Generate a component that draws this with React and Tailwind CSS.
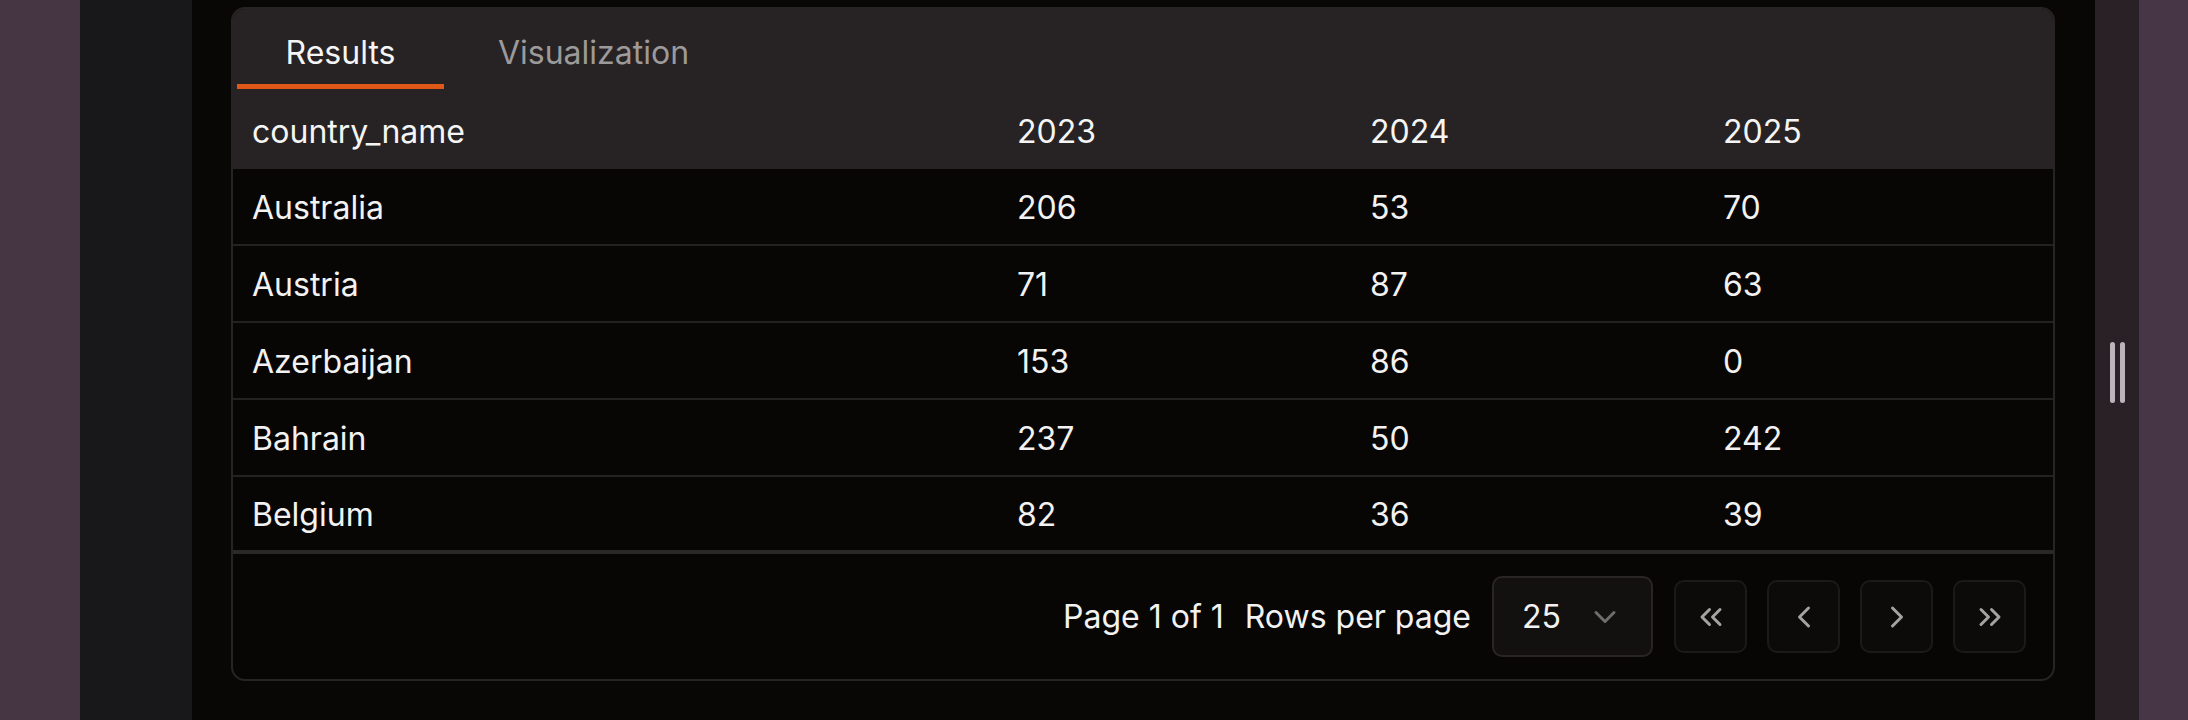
import React from "react";
import { ChevronDown, ChevronLeft, ChevronRight, ChevronsLeft, ChevronsRight } from "lucide-react";

const rows = [
  { country: "Australia", y2023: 206, y2024: 53, y2025: 70 },
  { country: "Austria", y2023: 71, y2024: 87, y2025: 63 },
  { country: "Azerbaijan", y2023: 153, y2024: 86, y2025: 0 },
  { country: "Bahrain", y2023: 237, y2024: 50, y2025: 242 },
  { country: "Belgium", y2023: 82, y2024: 36, y2025: 39 },
];

function Tabs() {
  return (
    <div className="h-[83px] flex items-end pl-[4px] pb-[3px] gap-[5px] bg-[#272324]">
      <button className="w-[207px] h-[72px] pt-[4px] flex items-center justify-center border-b-[5px] border-[#df5818] text-[#f5f5f5]">
        Results
      </button>
      <button className="w-[289px] h-[72px] pt-[4px] flex items-center justify-center border-b-[5px] border-transparent text-[#9c9a9a]">
        Visualization
      </button>
    </div>
  );
}

function PagerButton({ children }) {
  return (
    <button className="w-[73px] h-[73px] rounded-[10px] border-2 border-[#1c1919] bg-[#0d0a0a] flex items-center justify-center text-[#a3a3a3]">
      {children}
    </button>
  );
}

function ResultsTable() {
  const grid = "grid grid-cols-[765px_353px_353px_1fr] items-center pt-[2px]";
  return (
    <div>
      <div className={`${grid} h-[77px] bg-[#272324] text-[#f5f5f5]`}>
        <div className="px-[19px]">country_name</div>
        <div className="px-[19px]">2023</div>
        <div className="px-[19px]">2024</div>
        <div className="px-[19px]">2025</div>
      </div>
      {rows.map((r, i) => (
        <div
          key={r.country}
          className={`${grid} h-[77px] text-[#f2f2f2] ${i === rows.length - 1 ? "border-b-4 border-[#2b2828]" : "border-b-2 border-[#242121]"}`}
        >
          <div className="px-[19px]">{r.country}</div>
          <div className="px-[19px]">{r.y2023}</div>
          <div className="px-[19px]">{r.y2024}</div>
          <div className="px-[19px]">{r.y2025}</div>
        </div>
      ))}
    </div>
  );
}

function Footer() {
  return (
    <div className="h-[125px] flex items-center justify-end gap-[21px] pr-[27px] text-[#f2f2f2]">
      <span>Page 1 of 1</span>
      <span>Rows per page</span>
      <div className="w-[161px] h-[81px] rounded-[10px] border-2 border-[#292525] bg-[#131010] flex items-center justify-between pl-[28px] pr-[28px]">
        <span>25</span>
        <ChevronDown size={36} strokeWidth={2} className="text-[#6f6c6c]" />
      </div>
      <div className="flex items-center gap-[20px]">
        <PagerButton><ChevronsLeft size={36} strokeWidth={2} /></PagerButton>
        <PagerButton><ChevronLeft size={36} strokeWidth={2} /></PagerButton>
        <PagerButton><ChevronRight size={36} strokeWidth={2} /></PagerButton>
        <PagerButton><ChevronsRight size={36} strokeWidth={2} /></PagerButton>
      </div>
    </div>
  );
}

export default function App() {
  return (
    <div
      className="h-[720px] w-full flex overflow-hidden text-[32px] leading-none"
      style={{ fontFamily: "Inter, 'Noto Sans', sans-serif" }}
    >
      <div className="w-[80px] shrink-0 bg-[#463543]" />
      <div className="w-[112px] shrink-0 bg-[#18181b]" />
      <main className="flex-1 bg-[#090606] pl-[39px] pr-[40px] pt-[7px]">
        <div className="h-[674px] rounded-[14px] border-2 border-[#272424] bg-[#080505] overflow-hidden flex flex-col">
          <Tabs />
          <ResultsTable />
          <Footer />
        </div>
      </main>
      <div className="w-[44px] shrink-0 bg-[#2a2127] flex justify-center pt-[342px] gap-[5px]">
        <div className="w-[5px] h-[61px] rounded-full bg-[#bcb4ba]" />
        <div className="w-[5px] h-[61px] rounded-full bg-[#bcb4ba]" />
      </div>
      <div className="w-[49px] shrink-0 bg-[#473645]" />
    </div>
  );
}
